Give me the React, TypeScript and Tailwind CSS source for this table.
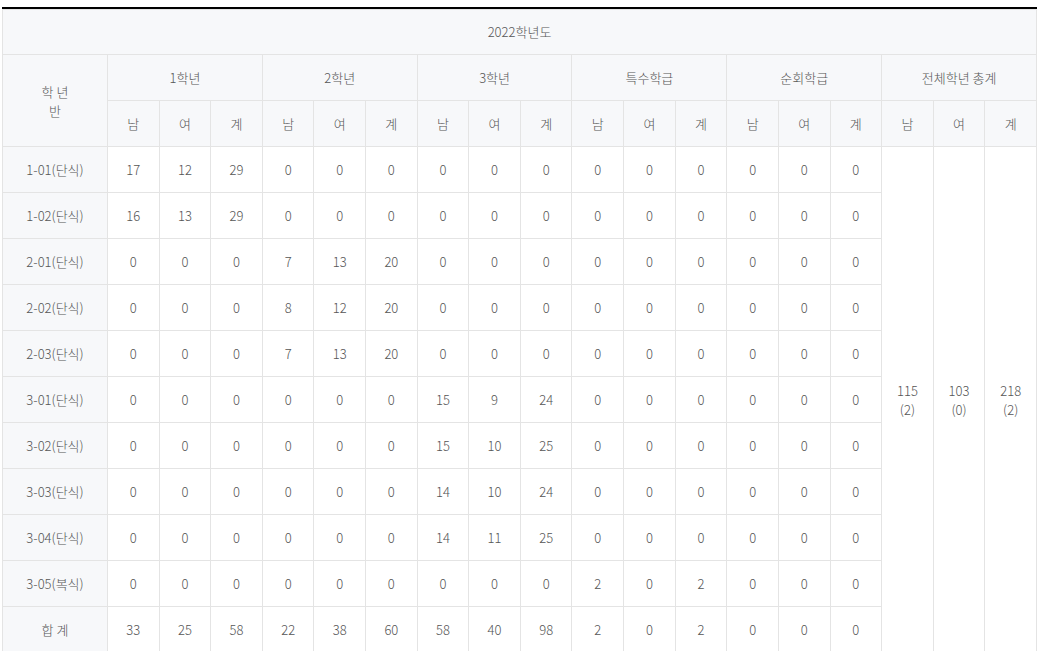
import React from "react";

type Row = { name: string; values: number[] };

const rows: Row[] = [
  { name: "1-01(단식)", values: [17, 12, 29, 0, 0, 0, 0, 0, 0, 0, 0, 0, 0, 0, 0] },
  { name: "1-02(단식)", values: [16, 13, 29, 0, 0, 0, 0, 0, 0, 0, 0, 0, 0, 0, 0] },
  { name: "2-01(단식)", values: [0, 0, 0, 7, 13, 20, 0, 0, 0, 0, 0, 0, 0, 0, 0] },
  { name: "2-02(단식)", values: [0, 0, 0, 8, 12, 20, 0, 0, 0, 0, 0, 0, 0, 0, 0] },
  { name: "2-03(단식)", values: [0, 0, 0, 7, 13, 20, 0, 0, 0, 0, 0, 0, 0, 0, 0] },
  { name: "3-01(단식)", values: [0, 0, 0, 0, 0, 0, 15, 9, 24, 0, 0, 0, 0, 0, 0] },
  { name: "3-02(단식)", values: [0, 0, 0, 0, 0, 0, 15, 10, 25, 0, 0, 0, 0, 0, 0] },
  { name: "3-03(단식)", values: [0, 0, 0, 0, 0, 0, 14, 10, 24, 0, 0, 0, 0, 0, 0] },
  { name: "3-04(단식)", values: [0, 0, 0, 0, 0, 0, 14, 11, 25, 0, 0, 0, 0, 0, 0] },
  { name: "3-05(복식)", values: [0, 0, 0, 0, 0, 0, 0, 0, 0, 2, 0, 2, 0, 0, 0] },
  { name: "합 계", values: [33, 25, 58, 22, 38, 60, 58, 40, 98, 2, 0, 2, 0, 0, 0] },
];

const groups = ["1학년", "2학년", "3학년", "특수학급", "순회학급", "전체학년 총계"];
const subs = ["남", "여", "계"];

// header-style cells share the pale grey fill
const th = "border border-[#e4e4e4] bg-[#f7f8fa] font-light text-center align-middle";
const td = "border border-[#e4e4e4] text-center align-middle";

export default function App() {
  return (
    <div className="w-[1040px] h-[651px] bg-white overflow-hidden pt-[7px]">
      <div
        className="ml-[2px] w-[1035px] border-t-2 border-black text-[13px] text-[#555] font-light"
        style={{ fontFamily: '"Noto Sans CJK KR", "Noto Sans", sans-serif' }}
      >
        <table className="w-full table-fixed border-collapse">
          <colgroup>
            <col className="w-[105px]" />
            {Array.from({ length: 18 }).map((_, i) => (
              <col key={i} />
            ))}
          </colgroup>
          <thead>
            <tr className="h-[45px]">
              <th colSpan={19} className={th}>
                2022학년도
              </th>
            </tr>
            <tr className="h-[46px]">
              <th rowSpan={2} className={th + " leading-[19px]"}>
                학 년
                <br />
                반
              </th>
              {groups.map((g) => (
                <th key={g} colSpan={3} className={th}>
                  {g}
                </th>
              ))}
            </tr>
            <tr className="h-[46px]">
              {groups.map((g) =>
                subs.map((s) => (
                  <th key={g + s} className={th}>
                    {s}
                  </th>
                ))
              )}
            </tr>
          </thead>
          <tbody>
            {rows.map((r, i) => (
              <tr key={r.name} className="h-[46px]">
                <th className={th}>{r.name}</th>
                {r.values.map((v, j) => (
                  <td key={j} className={td}>
                    {v}
                  </td>
                ))}
                {/* grand totals span every class row */}
                {i === 0 && (
                  <>
                    <td rowSpan={11} className={td + " leading-[19px]"}>
                      115
                      <br />
                      (2)
                    </td>
                    <td rowSpan={11} className={td + " leading-[19px]"}>
                      103
                      <br />
                      (0)
                    </td>
                    <td rowSpan={11} className={td + " leading-[19px]"}>
                      218
                      <br />
                      (2)
                    </td>
                  </>
                )}
              </tr>
            ))}
          </tbody>
        </table>
      </div>
    </div>
  );
}
